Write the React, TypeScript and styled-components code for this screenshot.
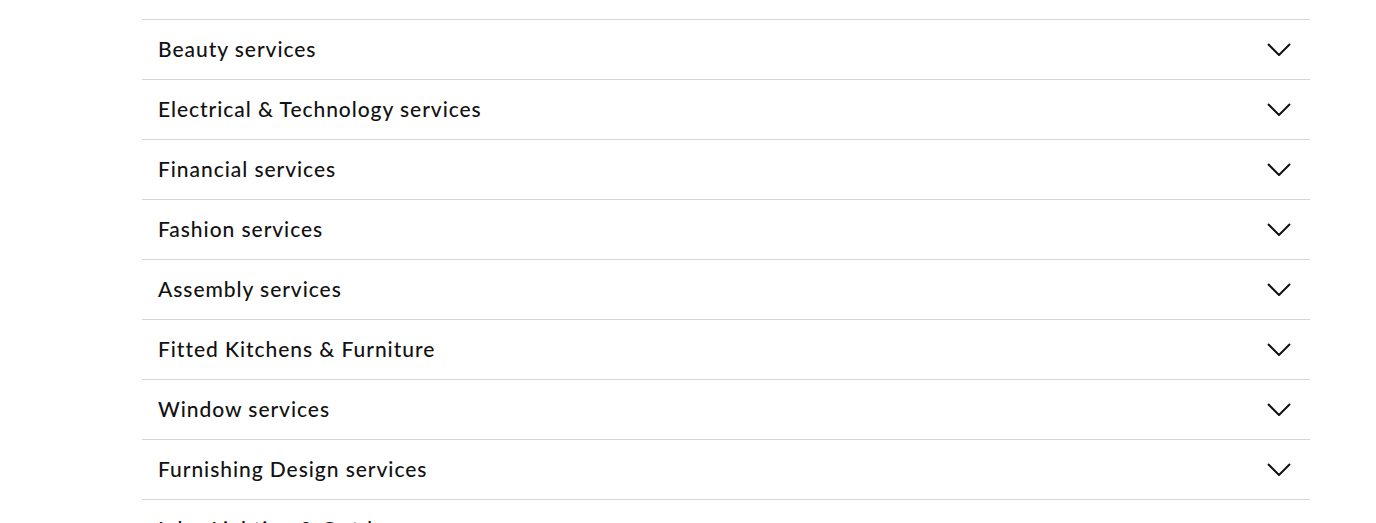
import React, { useState } from "react";
import styled, { createGlobalStyle } from "styled-components";

const GlobalStyle = createGlobalStyle`
  html, body {
    margin: 0;
    padding: 0;
    background: #fff;
    font-family: Lato, "Open Sans", sans-serif;
    color: #121212;
  }
`;

const items = [
  "Beauty services",
  "Electrical & Technology services",
  "Financial services",
  "Fashion services",
  "Assembly services",
  "Fitted Kitchens & Furniture",
  "Window services",
  "Furnishing Design services",
  "Inks, Lighting & Outdoor",
];

const Chevron = () => (
  <svg width="24" height="13" viewBox="0 0 24 13" fill="none">
    <path d="M1 1l11 11L23 1" stroke="#121212" strokeWidth="2" />
  </svg>
);

const App = () => {
  const [open, setOpen] = useState<number | null>(null);

  return (
    <>
      <GlobalStyle />
      <Page>
        <List>
          {items.map((label, i) => (
            <Row key={label}>
              <Header onClick={() => setOpen(open === i ? null : i)}>
                <Label>{label}</Label>
                <Icon $open={open === i}>
                  <Chevron />
                </Icon>
              </Header>
            </Row>
          ))}
        </List>
      </Page>
    </>
  );
};

export default App;

const Page = styled.div`
  padding: 19px 66px 40px 142px;
`;
const List = styled.ul`
  list-style: none;
  margin: 0;
  padding: 0;
  width: 1168px;
`;
const Row = styled.li`
  border-top: 1px solid #d6d6d6;
`;
const Header = styled.button`
  display: flex;
  align-items: center;
  justify-content: space-between;
  width: 100%;
  height: 59px;
  padding: 0 19px 2px 16px;
  border: none;
  background: none;
  cursor: pointer;
  font: inherit;
  color: inherit;
  text-align: left;
`;
const Label = styled.span`
  font-size: 21px;
  font-weight: 500;
  letter-spacing: 0.95px;
`;
const Icon = styled.span<{ $open: boolean }>`
  display: flex;
  margin-top: 1px;
  transform: rotate(${(p) => (p.$open ? "180deg" : "0deg")});
`;
